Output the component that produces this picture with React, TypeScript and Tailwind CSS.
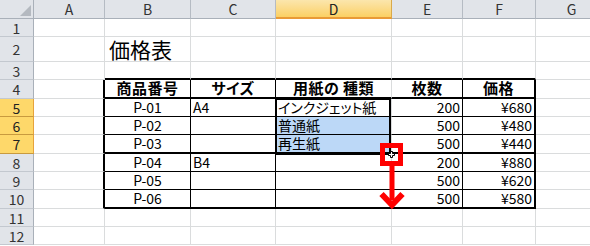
import React from "react";

const R_GRID = "border-r border-r-[#dadcdd]";
const R_THIN = "border-r border-r-black";
const R_THICK = "border-r-2 border-r-black";
const B_GRID = "border-b border-b-[#dadcdd]";
const B_THIN = "border-b border-b-black";
const B_THICK = "border-b-2 border-b-black";

const colWidths = ["w-[71px]", "w-[86px]", "w-[85px]", "w-[116px]", "w-[71px]", "w-[73px]", "w-[72px]"];
const letters = ["A", "B", "C", "D", "E", "F", "G"];

type Cell = { t?: string; r?: string; b?: string; a?: string };
type Row = { n: number; h: string; sel?: boolean; cells: Cell[] };

const products = [
  { id: "P-01", size: "A4", paper: "インクジェット紙", qty: "200", price: "¥680" },
  { id: "P-02", size: "", paper: "普通紙", qty: "500", price: "¥480" },
  { id: "P-03", size: "", paper: "再生紙", qty: "500", price: "¥440" },
  { id: "P-04", size: "B4", paper: "", qty: "200", price: "¥880" },
  { id: "P-05", size: "", paper: "", qty: "500", price: "¥620" },
  { id: "P-06", size: "", paper: "", qty: "500", price: "¥580" },
];

const heights: Record<number, string> = {
  1: "h-[18px]", 2: "h-[25px]", 3: "h-[18px]", 4: "h-[19px]", 5: "h-[18px]", 6: "h-[18px]",
  7: "h-[19px]", 8: "h-[18px]", 9: "h-[18px]", 10: "h-[19px]", 11: "h-[18px]", 12: "h-[18px]",
};

function emptyRow(): Cell[] {
  return letters.map(() => ({}));
}

function buildRows(): Row[] {
  const rows: Row[] = [];
  for (let n = 1; n <= 12; n++) rows.push({ n, h: heights[n], sel: n >= 5 && n <= 7, cells: emptyRow() });

  rows[1].cells[1] = { t: "価格表", a: "title" };
  for (let c = 1; c <= 5; c++) rows[2].cells[c].b = B_THICK;

  const head = ["商品番号", "サイズ", "用紙の 種類", "枚数", "価格"];
  // table rows 4..10 (index 3..9)
  for (let i = 3; i <= 9; i++) {
    const cells = rows[i].cells;
    cells[0].r = R_THICK;
    const bottom = i === 3 || i === 6 || i === 9 ? B_THICK : B_THIN;
    for (let c = 1; c <= 5; c++) {
      cells[c].b = bottom;
      cells[c].r = c === 5 ? R_THICK : c === 3 ? R_GRID : R_THIN;
    }
    if (i === 3) {
      head.forEach((t, k) => {
        cells[k + 1].t = t;
        cells[k + 1].a = "head";
      });
    } else {
      const p = products[i - 4];
      cells[1].t = p.id;
      cells[1].a = "center";
      cells[2].t = p.size;
      cells[3].t = p.paper;
      cells[4].t = p.qty;
      cells[4].a = "right";
      cells[5].t = p.price;
      cells[5].a = "right";
    }
  }
  return rows;
}

function alignClass(a?: string) {
  if (a === "title") return "justify-start pl-[4px] pb-[1px] text-[21px]";
  if (a === "head") return "justify-center pb-[2px] font-bold text-[15px] tracking-[0.5px]";
  if (a === "center") return "justify-center pb-[2px]";
  if (a === "right") return "justify-end pr-[2px] pb-[2px]";
  return "justify-start pl-[2px] pb-[2px]";
}

function RowHeader({ n, h, sel }: { n: number; h: string; sel?: boolean }) {
  return (
    <div
      className={`${h} w-[34px] shrink-0 box-border flex items-center justify-center border-r border-b text-[14px] leading-none ${
        sel
          ? "bg-[#fed86a] border-r-[#e6a33c] border-b-[#c89a3e] text-[#222]"
          : "bg-[#e1e4e9] border-r-[#a9b0b9] border-b-[#c3c8cf] text-[#333]"
      }`}
    >
      {n}
    </div>
  );
}

export default function App() {
  const rows = buildRows();
  return (
    <div className="relative w-[590px] h-[246px] overflow-hidden bg-white font-['Noto_Sans_CJK_JP',sans-serif] [font-feature-settings:'palt']">
      {/* column headers */}
      <div className="flex h-[19px]">
        <div className="w-[34px] shrink-0 box-border border-r border-b border-r-[#a9b0b9] border-b-[#a9b0b9] bg-[#e1e4e9] flex items-end justify-end p-[2px]">
          <svg width="11" height="11" viewBox="0 0 11 11">
            <polygon points="11,0 11,11 0,11" fill="#b4b9c0" />
          </svg>
        </div>
        {letters.map((l, i) => (
          <div
            key={l}
            className={`${colWidths[i]} shrink-0 box-border flex items-center justify-center border-r border-b text-[14px] leading-none ${
              l === "D"
                ? "bg-gradient-to-b from-[#fbe6ac] to-[#fbd062] border-r-[#d9a94a] border-b-2 border-b-[#e99a36] text-[#222]"
                : "bg-[#e1e4e9] border-r-[#b5bbc3] border-b-[#a9b0b9] text-[#333]"
            }`}
          >
            {l}
          </div>
        ))}
      </div>

      {rows.map((row) => (
        <div key={row.n} className="flex">
          <RowHeader n={row.n} h={row.h} sel={row.sel} />
          {row.cells.map((c, i) => {
            const selFill = row.sel && i === 3 && row.n !== 5 ? "bg-[#bcd8f7]" : "";
            return (
              <div
                key={i}
                className={`${row.h} ${colWidths[i]} shrink-0 box-border flex items-end whitespace-nowrap text-[14px] leading-none text-black ${
                  c.r ?? R_GRID
                } ${c.b ?? B_GRID} ${selFill} ${alignClass(c.a)}`}
              >
                {c.t}
              </div>
            );
          })}
        </div>
      ))}

      {/* selection D5:D7 */}
      <div className="absolute left-[275px] top-[98px] w-[116px] h-[57px] border-2 border-black pointer-events-none" />

      {/* fill-handle annotation */}
      <svg className="absolute left-0 top-0 pointer-events-none" width="590" height="246" viewBox="0 0 590 246">
        <rect x="382.5" y="145.5" width="18" height="18" fill="none" stroke="#ff0000" strokeWidth="5" />
        <rect x="389.5" y="166" width="5" height="34" fill="#ff0000" />
        <polyline points="381.5,194 392,205 402.5,194" fill="none" stroke="#ff0000" strokeWidth="6" strokeLinejoin="miter" />
        <path d="M390.5 151.5h2v2h2v2h-2v2h-2v-2h-2v-2h2z" fill="#fff" stroke="#000" strokeWidth="1" />
      </svg>
    </div>
  );
}
